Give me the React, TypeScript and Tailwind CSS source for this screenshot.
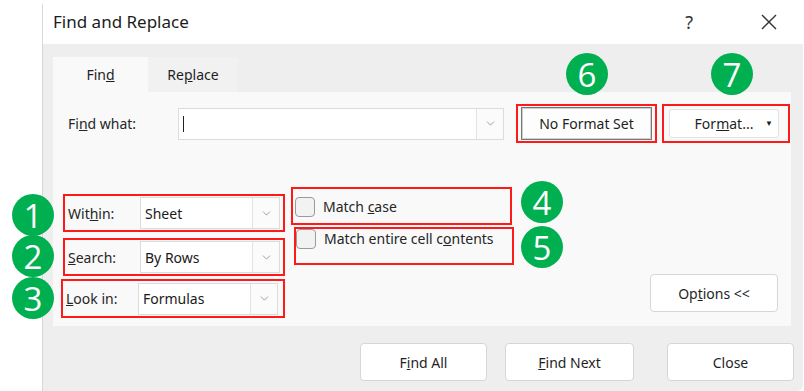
import { ChevronDown } from "lucide-react";

const font = { fontFamily: '"Noto Sans", "Open Sans", sans-serif' };

function Badge({ n, x, y }: { n: number; x: number; y: number }) {
  // annotation bubble laid over the dialog
  return (
    <div
      className="absolute flex h-[42px] w-[42px] items-center justify-center rounded-full bg-[#00b050] text-[33px] leading-none text-white"
      style={{ left: x - 21, top: y - 21, fontFamily: '"Open Sans", sans-serif' }}
    >
      {n}
    </div>
  );
}

function Combo({ value, width }: { value: string; width: string }) {
  return (
    <div className={`flex h-[32px] ${width} items-stretch border border-[#dcdcdc] bg-white`}>
      <div className="flex flex-1 items-center pl-[4px] text-[14px] text-[#1a1a1a]">{value}</div>
      <div className="flex w-[27px] items-center justify-center border-l border-[#e3e3e3] bg-[#fbfbfb]">
        <ChevronDown className="h-[13px] w-[13px] text-[#8a8a8a]" strokeWidth={1.5} />
      </div>
    </div>
  );
}

function OptRow({ label, value, className }: { label: React.ReactNode; value: string; className: string }) {
  return (
    <div className={`flex h-[38px] w-[222px] items-center border-2 border-[#ff1a1a] pl-[3px] ${className}`}>
      <div className="w-[72px] text-[14px] text-[#262626]">{label}</div>
      <Combo value={value} width="w-[140px]" />
    </div>
  );
}

function Check({ label, className, top }: { label: React.ReactNode; className: string; top: string }) {
  return (
    <div className={`flex h-[38px] border-2 border-[#ff1a1a] ${className}`}>
      <div className={`${top} h-[20px] w-[20px] rounded-[4px] border border-[#9a9a9a] bg-[#f2f2f2]`} />
      <div className={`${top} ml-[8px] text-[14px] leading-[20px] text-[#262626]`}>{label}</div>
    </div>
  );
}

function Btn({ children, className }: { children: React.ReactNode; className?: string }) {
  return (
    <div
      className={`flex h-[38px] items-center justify-center rounded-[4px] border border-[#d6d6d6] bg-white text-[14px] text-[#1f1f1f] ${className ?? ""}`}
    >
      {children}
    </div>
  );
}

export default function App() {
  return (
    <div className="relative h-[391px] w-[804px] overflow-hidden bg-white" style={font}>
      <div className="ml-[42px] flex h-[391px] w-[761px] flex-col rounded-tl-[6px] rounded-br-[6px] border-l border-[#d8d8d8] bg-[#eeeeee]">
        {/* title bar */}
        <div className="flex h-[44px] items-center bg-white pl-[10px] pr-[14px]">
          <div className="text-[17px] text-[#1c1c1c]">Find and Replace</div>
          <div className="ml-auto mr-[68px] text-[18px] text-[#333]">?</div>
          <svg width="16" height="16" viewBox="0 0 16 16" className="mr-[12px]">
            <path d="M1 1 L15 15 M15 1 L1 15" stroke="#333" strokeWidth="1.4" />
          </svg>
        </div>

        <div className="pl-[10px] pt-[13px]">
          {/* tabs */}
          <div className="flex h-[35px]">
            <div className="flex w-[95px] items-center justify-center bg-[#f9f9f9] text-[14px] text-[#1f1f1f]">
              Fin<span className="underline">d</span>
            </div>
            <div className="flex w-[90px] items-center justify-center bg-[#f1f1f1] text-[14px] text-[#1f1f1f]">
              Re<span className="underline">p</span>lace
            </div>
          </div>

          {/* panel */}
          <div className="h-[234px] w-[738px] bg-[#f9f9f9] pt-[12px]">
            <div className="flex h-[39px] items-center">
              <div className="w-[125px] pl-[15px] text-[14px] text-[#262626]">
                Fi<span className="underline">n</span>d what:
              </div>
              <div className="flex h-[32px] w-[326px] items-stretch border border-[#dcdcdc] bg-white">
                <div className="flex flex-1 items-center pl-[4px]">
                  <div className="h-[16px] w-[1px] bg-[#222]" />
                </div>
                <div className="flex w-[27px] items-center justify-center border-l border-[#e3e3e3] bg-[#fbfbfb]">
                  <ChevronDown className="h-[13px] w-[13px] text-[#8a8a8a]" strokeWidth={1.5} />
                </div>
              </div>
              <div className="ml-[12px] flex h-[39px] w-[141px] items-center justify-center border-2 border-[#ff1a1a]">
                <div className="flex h-[33px] w-[131px] items-center justify-center border border-[#777] bg-[#fdfdfd] text-[14px] text-[#1f1f1f] shadow-[inset_0_0_0_1px_#cfcfcf]">
                  No Format Set
                </div>
              </div>
              <div className="ml-[5px] flex h-[39px] w-[128px] items-center border-2 border-[#ff1a1a] pl-[5px]">
                <div className="relative flex h-[29px] w-[110px] items-center justify-center rounded-[3px] border border-[#e2e2e2] bg-white text-[14px] text-[#1f1f1f]">
                  For<span className="underline">m</span>at...
                  <span className="absolute right-[5px] top-[7px] text-[8px]">▼</span>
                </div>
              </div>
            </div>

            <div className="mt-[44px] flex">
              <div className="ml-[10px] mt-[7px] flex flex-col">
                <OptRow
                  className=""
                  label={
                    <>
                      Wit<span className="underline">h</span>in:
                    </>
                  }
                  value="Sheet"
                />
                <OptRow
                  className="mt-[6px]"
                  label={
                    <>
                      <span className="underline">S</span>earch:
                    </>
                  }
                  value="By Rows"
                />
                <OptRow
                  className="-ml-[2px] mt-[3px] h-[39px] w-[224px]"
                  label={
                    <>
                      <span className="underline">L</span>ook in:
                    </>
                  }
                  value="Formulas"
                />
              </div>

              <div className="ml-[6px] flex flex-col">
                <Check
                  className="w-[221px] pl-[2px]"
                  top="mt-[8px]"
                  label={
                    <>
                      Match <span className="underline">c</span>ase
                    </>
                  }
                />
                <Check
                  className="ml-[3px] mt-[2px] w-[220px] pl-[0px]"
                  top="mt-[0px]"
                  label={
                    <>
                      Match entire cell c<span className="underline">o</span>ntents
                    </>
                  }
                />
              </div>

              <Btn className="ml-[136px] mt-[87px] h-[36px] w-[128px]">
                Op<span className="underline">t</span>ions &lt;&lt;
              </Btn>
            </div>
          </div>

          {/* bottom buttons */}
          <div className="mt-[17px] flex">
            <Btn className="ml-[307px] w-[127px]">
              F<span className="underline">i</span>nd All
            </Btn>
            <Btn className="ml-[18px] w-[129px] border-[#6b9bd6]">
              <span className="underline">F</span>ind Next
            </Btn>
            <Btn className="ml-[33px] w-[127px]">Close</Btn>
          </div>
        </div>
      </div>

      <Badge n={1} x={33} y={215} />
      <Badge n={2} x={33} y={256} />
      <Badge n={3} x={33} y={298} />
      <Badge n={4} x={542} y={202} />
      <Badge n={5} x={542} y={247} />
      <Badge n={6} x={587} y={74} />
      <Badge n={7} x={732} y={74} />
    </div>
  );
}
